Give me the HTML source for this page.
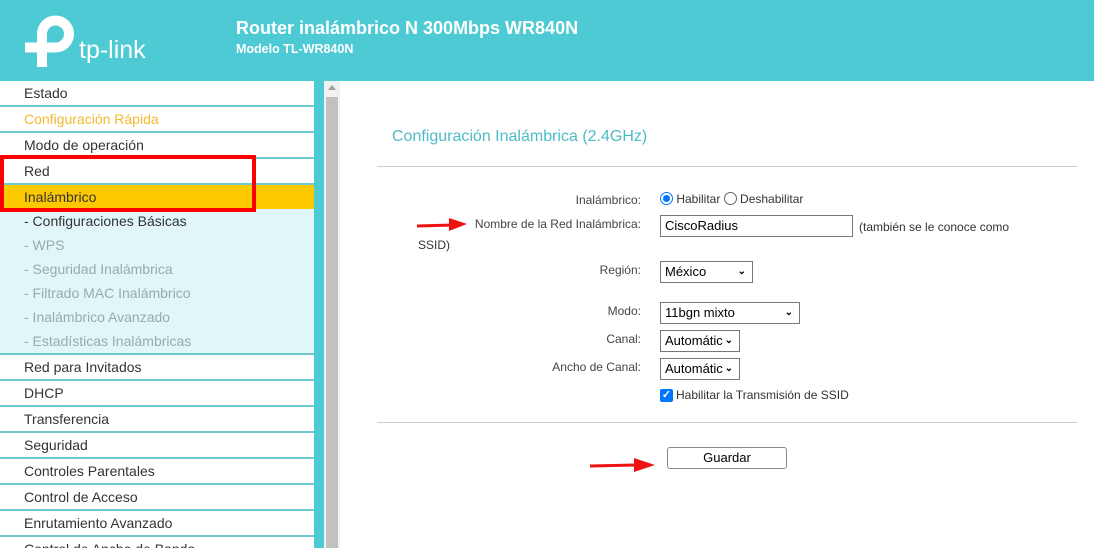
<!DOCTYPE html>
<html><head><meta charset="utf-8"><style>
*{margin:0;padding:0;box-sizing:border-box}
body{width:1094px;height:548px;overflow:hidden;font-family:"Liberation Sans",Arial,sans-serif;background:#fff;position:relative}
.hdr{position:absolute;left:0;top:0;width:1094px;height:81px;background:#4dcad4}
.t1{position:absolute;left:236px;top:18px;color:#fff;font-weight:bold;font-size:18px}
.t2{position:absolute;left:236px;top:42px;color:#fff;font-weight:bold;font-size:12.5px}
.side{position:absolute;left:0;top:81px;width:314px;height:467px;background:#6ecad0;overflow:hidden}
.it{position:absolute;left:0;width:314px;height:24px;background:#fff;font-size:14px;color:#333;padding-left:24px;line-height:24px}
.sub{position:absolute;left:0;width:314px;height:24px;background:#e1f6f8;font-size:14px;color:#9aa;padding-left:24px;line-height:24px}
.strip{position:absolute;left:314px;top:81px;width:10px;height:467px;background:#4dcad4}
.sb{position:absolute;left:324px;top:81px;width:16px;height:467px;background:#f1f1f1}
.thumb{position:absolute;left:326px;top:97px;width:12px;height:451px;background:#c1c1c1}
.lbl{position:absolute;font-size:12px;color:#444;text-align:right;width:240px;left:401px}
.sel{position:absolute;border:1px solid #777;font-size:13px;color:#000;padding-left:4px;line-height:20px;height:22px;background:#fff}
.sel i{position:absolute;right:6px;top:0;font-style:normal;font-size:10px;font-weight:bold}
.hr{position:absolute;left:377px;width:700px;height:1px;background:#ccc}
</style></head><body>
<div class="hdr">
<svg style="position:absolute;left:0;top:0" width="200" height="81" viewBox="0 0 200 81">
<path d="M42 67 V34 A13.5 13.5 0 1 1 55.5 47.5 H25" fill="none" stroke="#fff" stroke-width="10"/>
<text x="79" y="58" fill="#fff" font-family="Liberation Sans" font-size="25">tp-link</text>
</svg>
<div class="t1">Router inalámbrico N 300Mbps WR840N</div>
<div class="t2">Modelo TL-WR840N</div>
</div>
<div class="side">
<div class="it" style="top:0">Estado</div>
<div class="it" style="top:26px;color:#f5b82e">Configuración Rápida</div>
<div class="it" style="top:52px">Modo de operación</div>
<div class="it" style="top:78px">Red</div>
<div class="it" style="top:104px;background:#fcc800;height:24px">Inalámbrico</div>
<div class="sub" style="top:128px;color:#333">- Configuraciones Básicas</div>
<div class="sub" style="top:152px">- WPS</div>
<div class="sub" style="top:176px">- Seguridad Inalámbrica</div>
<div class="sub" style="top:200px">- Filtrado MAC Inalámbrico</div>
<div class="sub" style="top:224px">- Inalámbrico Avanzado</div>
<div class="sub" style="top:248px">- Estadísticas Inalámbricas</div>
<div class="it" style="top:274px">Red para Invitados</div>
<div class="it" style="top:300px">DHCP</div>
<div class="it" style="top:326px">Transferencia</div>
<div class="it" style="top:352px">Seguridad</div>
<div class="it" style="top:378px">Controles Parentales</div>
<div class="it" style="top:404px">Control de Acceso</div>
<div class="it" style="top:430px">Enrutamiento Avanzado</div>
<div class="it" style="top:456px">Control de Ancho de Banda</div>
</div>
<div style="position:absolute;left:0;top:155px;width:256px;height:57px;border:4px solid #f00"></div>
<div class="strip"></div><div class="sb"></div><div class="thumb"></div>
<div style="position:absolute;left:328px;top:85px;width:0;height:0;border-left:4px solid transparent;border-right:4px solid transparent;border-bottom:5px solid #a0a0a0"></div>

<div style="position:absolute;left:392px;top:128px;font-size:16px;color:#4dbcc6">Configuración Inalámbrica (2.4GHz)</div>
<div class="hr" style="top:166px"></div>
<div class="lbl" style="top:193px">Inalámbrico:</div>
<div style="position:absolute;left:660px;top:192px;font-size:12px;color:#333;line-height:15px">
<span style="display:inline-block;width:13px;height:13px;border:1px solid #0075ff;border-radius:50%;vertical-align:-2px;position:relative"><span style="position:absolute;left:2px;top:2px;width:7px;height:7px;border-radius:50%;background:#0075ff"></span></span> Habilitar <span style="display:inline-block;width:13px;height:13px;border:1px solid #666;border-radius:50%;vertical-align:-2px"></span> Deshabilitar</div>
<div class="lbl" style="top:217px">Nombre de la Red Inalámbrica:</div>
<div class="sel" style="left:660px;top:215px;width:193px">CiscoRadius</div>
<div style="position:absolute;left:859px;top:220px;font-size:12px;color:#333">(también se le conoce como</div>
<div style="position:absolute;left:418px;top:238px;font-size:12px;color:#333">SSID)</div>
<div class="lbl" style="top:263px">Región:</div>
<div class="sel" style="left:660px;top:261px;width:93px">México<i>&#8964;</i></div>
<div class="lbl" style="top:304px">Modo:</div>
<div class="sel" style="left:660px;top:302px;width:140px">11bgn mixto<i>&#8964;</i></div>
<div class="lbl" style="top:332px">Canal:</div>
<div class="sel" style="left:660px;top:330px;width:80px;overflow:hidden">Automátic<i style="background:#fff;padding-left:2px">&#8964;</i></div>
<div class="lbl" style="top:360px">Ancho de Canal:</div>
<div class="sel" style="left:660px;top:358px;width:80px;overflow:hidden">Automátic<i style="background:#fff;padding-left:2px">&#8964;</i></div>
<div style="position:absolute;left:660px;top:389px;width:13px;height:13px;background:#0075ff;border-radius:2px;color:#fff;font-size:11px;line-height:13px;text-align:center;font-weight:bold">✓</div>
<div style="position:absolute;left:676px;top:388px;font-size:12px;color:#333">Habilitar la Transmisión de SSID</div>
<div class="hr" style="top:422px"></div>
<div style="position:absolute;left:667px;top:447px;width:120px;height:22px;border:1px solid #888;border-radius:3px;background:#fff;font-size:13px;text-align:center;line-height:20px;color:#000">Guardar</div>
<svg style="position:absolute;left:415px;top:216px" width="55" height="18"><path d="M2 10 L38 9" stroke="#e11" stroke-width="3"/><path d="M34 2 L52 8 L34 15 Z" fill="#e11"/></svg>
<svg style="position:absolute;left:588px;top:457px" width="70" height="18"><path d="M2 9 L50 8" stroke="#e11" stroke-width="3"/><path d="M46 1 L67 8 L46 15 Z" fill="#e11"/></svg>
</body></html>
